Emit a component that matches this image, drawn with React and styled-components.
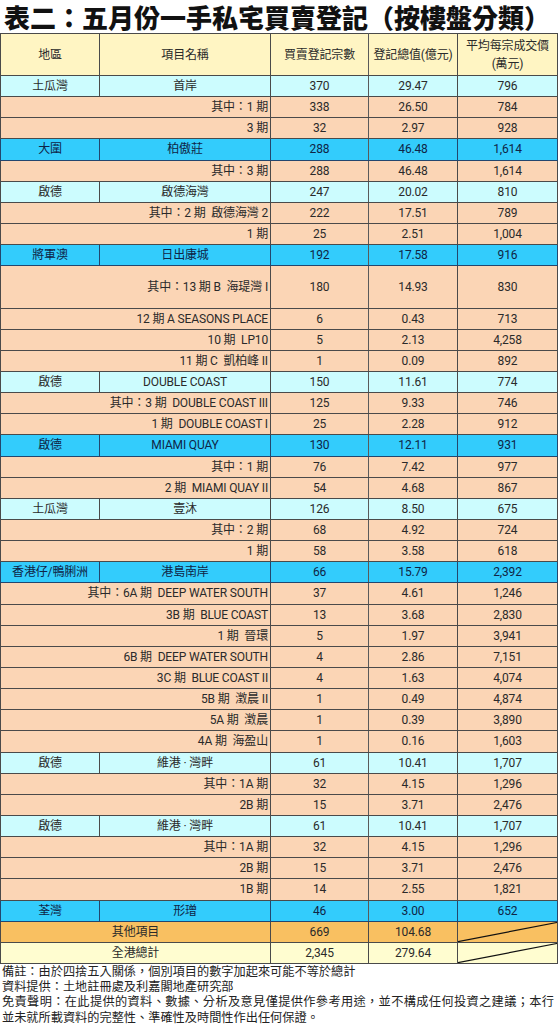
import React from "react";
import styled, { createGlobalStyle } from "styled-components";

const GlobalStyle = createGlobalStyle`
  html, body {
    margin: 0;
    padding: 0;
    background: #ffffff;
    overflow: hidden;
  }
  body {
    font-family: Roboto, "Noto Sans CJK TC", sans-serif;
    color: #222;
  }
`;

const rows = [
  { t: "g", c: "cyan", a: "土瓜灣", n: "首岸", v: ["370", "29.47", "796"] },
  { t: "s", n: "其中：1 期", v: ["338", "26.50", "784"] },
  { t: "s", n: "3 期", v: ["32", "2.97", "928"] },
  { t: "g", c: "blue", a: "大圍", n: "柏傲莊", v: ["288", "46.48", "1,614"] },
  { t: "s", n: "其中：3 期", v: ["288", "46.48", "1,614"] },
  { t: "g", c: "cyan", a: "啟德", n: "啟德海灣", v: ["247", "20.02", "810"] },
  { t: "s", n: "其中：2 期  啟德海灣 2", v: ["222", "17.51", "789"] },
  { t: "s", n: "1 期", v: ["25", "2.51", "1,004"] },
  { t: "g", c: "blue", a: "將軍澳", n: "日出康城", v: ["192", "17.58", "916"] },
  { t: "s", tall: true, n: "其中：13 期 B  海瑅灣 I", v: ["180", "14.93", "830"] },
  { t: "s", n: "12 期 A SEASONS PLACE", v: ["6", "0.43", "713"] },
  { t: "s", n: "10 期  LP10", v: ["5", "2.13", "4,258"] },
  { t: "s", n: "11 期 C  凱柏峰 II", v: ["1", "0.09", "892"] },
  { t: "g", c: "cyan", a: "啟德", n: "DOUBLE COAST", v: ["150", "11.61", "774"] },
  { t: "s", n: "其中：3 期  DOUBLE COAST III", v: ["125", "9.33", "746"] },
  { t: "s", n: "1 期  DOUBLE COAST I", v: ["25", "2.28", "912"] },
  { t: "g", c: "blue", a: "啟德", n: "MIAMI QUAY", v: ["130", "12.11", "931"] },
  { t: "s", n: "其中：1 期", v: ["76", "7.42", "977"] },
  { t: "s", n: "2 期  MIAMI QUAY II", v: ["54", "4.68", "867"] },
  { t: "g", c: "cyan", a: "土瓜灣", n: "壹沐", v: ["126", "8.50", "675"] },
  { t: "s", n: "其中：2 期", v: ["68", "4.92", "724"] },
  { t: "s", n: "1 期", v: ["58", "3.58", "618"] },
  { t: "g", c: "blue", a: "香港仔/鴨脷洲", n: "港島南岸", v: ["66", "15.79", "2,392"] },
  { t: "s", n: "其中：6A 期  DEEP WATER SOUTH", v: ["37", "4.61", "1,246"] },
  { t: "s", n: "3B 期  BLUE COAST", v: ["13", "3.68", "2,830"] },
  { t: "s", n: "1 期  晉環", v: ["5", "1.97", "3,941"] },
  { t: "s", n: "6B 期  DEEP WATER SOUTH", v: ["4", "2.86", "7,151"] },
  { t: "s", n: "3C 期  BLUE COAST II", v: ["4", "1.63", "4,074"] },
  { t: "s", n: "5B 期  澂晨 II", v: ["1", "0.49", "4,874"] },
  { t: "s", n: "5A 期  澂晨", v: ["1", "0.39", "3,890"] },
  { t: "s", n: "4A 期  海盈山", v: ["1", "0.16", "1,603"] },
  { t: "g", c: "cyan", a: "啟德", n: "維港 · 灣畔", v: ["61", "10.41", "1,707"] },
  { t: "s", n: "其中：1A 期", v: ["32", "4.15", "1,296"] },
  { t: "s", n: "2B 期", v: ["15", "3.71", "2,476"] },
  { t: "g", c: "cyan", a: "啟德", n: "維港 · 灣畔", v: ["61", "10.41", "1,707"] },
  { t: "s", n: "其中：1A 期", v: ["32", "4.15", "1,296"] },
  { t: "s", n: "2B 期", v: ["15", "3.71", "2,476"] },
  { t: "s", n: "1B 期", v: ["14", "2.55", "1,821"] },
  { t: "g", c: "blue", a: "荃灣", n: "形璔", v: ["46", "3.00", "652"] },
];

const fills = {
  head: "#fff5c3",
  cyan: "#ccfcfe",
  blue: "#33ccfc",
  peach: "#fbd5b5",
  other: "#f9c061",
  total: "#fffdd0",
};

function Slash() {
  return (
    <SlashSvg viewBox="0 0 100 20" preserveAspectRatio="none">
      <line x1="0" y1="19.5" x2="100" y2="0.5" stroke="#111" strokeWidth="1.2" vectorEffect="non-scaling-stroke" />
    </SlashSvg>
  );
}

export default function App() {
  return (
    <>
      <GlobalStyle />
      <Page>
        <Title>表二：五月份一手私宅買賣登記（按樓盤分類）</Title>
        <Table>
          <colgroup>
            <col style={{ width: 99 }} />
            <col style={{ width: 171 }} />
            <col style={{ width: 98 }} />
            <col style={{ width: 89 }} />
            <col style={{ width: 100 }} />
          </colgroup>
          <tbody>
            <HeadRow>
              <Cell>地區</Cell>
              <Cell>項目名稱</Cell>
              <Cell $soft>買賣登記宗數</Cell>
              <Cell>登記總值(億元)</Cell>
              <Cell $twoLine>
                平均每宗成交價
                <br />
                (萬元)
              </Cell>
            </HeadRow>
            {rows.map((r, i) =>
              r.t === "g" ? (
                <Row key={i} $fill={r.c} $tall={r.tall}>
                  <Cell $navy={r.c === "blue"}>{r.a}</Cell>
                  <Cell $navy={r.c === "blue"}>{r.n}</Cell>
                  <Cell $soft $navy={r.c === "blue"}>{r.v[0]}</Cell>
                  <Cell $navy={r.c === "blue"}>{r.v[1]}</Cell>
                  <Cell $navy={r.c === "blue"}>{r.v[2]}</Cell>
                </Row>
              ) : (
                <Row key={i} $fill="peach" $tall={r.tall}>
                  <Cell colSpan={2} $right>
                    {r.n}
                  </Cell>
                  <Cell $soft>{r.v[0]}</Cell>
                  <Cell>{r.v[1]}</Cell>
                  <Cell>{r.v[2]}</Cell>
                </Row>
              )
            )}
            <Row $fill="other">
              <Cell colSpan={2}>其他項目</Cell>
              <Cell>669</Cell>
              <Cell>104.68</Cell>
              <SlashCell>
                <Slash />
              </SlashCell>
            </Row>
            <Row $fill="total">
              <Cell colSpan={2}>全港總計</Cell>
              <Cell>2,345</Cell>
              <Cell>279.64</Cell>
              <SlashCell>
                <Slash />
              </SlashCell>
            </Row>
          </tbody>
        </Table>
        <Notes>
          <Note>備註：由於四捨五入關係，個別項目的數字加起來可能不等於總計</Note>
          <Note>資料提供：土地註冊處及利嘉閣地產研究部</Note>
          <Note $justify>免責聲明：在此提供的資料、數據、分析及意見僅提供作參考用途，並不構成任何投資之建議；本行</Note>
          <Note>並未就所載資料的完整性、準確性及時間性作出任何保證。</Note>
        </Notes>
      </Page>
    </>
  );
}

const Page = styled.div`
  width: 558px;
  height: 1024px;
  background: #fff;
`;

const Title = styled.h1`
  margin: 0;
  padding: 0 0 0 4px;
  font-family: "Noto Sans CJK TC", sans-serif;
  font-weight: 900;
  font-size: 26px;
  line-height: 33px;
  color: #111;
  white-space: nowrap;
`;

const Table = styled.table`
  width: 557px;
  table-layout: fixed;
  border-collapse: collapse;
  border: 1px solid #444;
  font-size: 12px;
  letter-spacing: -0.15px;
`;

const Row = styled.tr`
  height: ${(p) => (p.$tall ? "42.3px" : "21.15px")};
  background: ${(p) => fills[p.$fill]};
`;

const HeadRow = styled.tr`
  height: 42px;
  background: ${fills.head};
`;

const Cell = styled.td`
  padding: 0 2px;
  border: 1px solid ${(p) => (p.$navy ? "#23466e" : "#4a4a4a")};
  border-right-color: ${(p) => (p.$soft ? "#5a5a5a" : p.$navy ? "#23466e" : "#4a4a4a")};
  border-left-color: ${(p) => (p.$soft ? "#a8a8a8" : p.$navy ? "#23466e" : "#4a4a4a")};
  text-align: ${(p) => (p.$right ? "right" : "center")};
  vertical-align: middle;
  line-height: ${(p) => (p.$twoLine ? "18px" : "20px")};
  white-space: pre;
  color: ${(p) => (p.$navy ? "#0f2546" : "#2a2a2a")};
  overflow: hidden;
`;

const SlashCell = styled.td`
  position: relative;
  padding: 0;
  border: 1px solid #4a4a4a;
`;

const SlashSvg = styled.svg`
  position: absolute;
  inset: 0;
  width: 100%;
  height: 100%;
  display: block;
`;

const Notes = styled.div`
  width: 552px;
  padding: 0 0 0 2px;
  font-family: "Noto Sans CJK TC", sans-serif;
  font-size: 12.2px;
  line-height: 15.2px;
  color: #222;
`;

const Note = styled.div`
  white-space: nowrap;
  ${(p) => p.$justify && "text-align: justify; text-align-last: justify; white-space: normal;"}
`;
